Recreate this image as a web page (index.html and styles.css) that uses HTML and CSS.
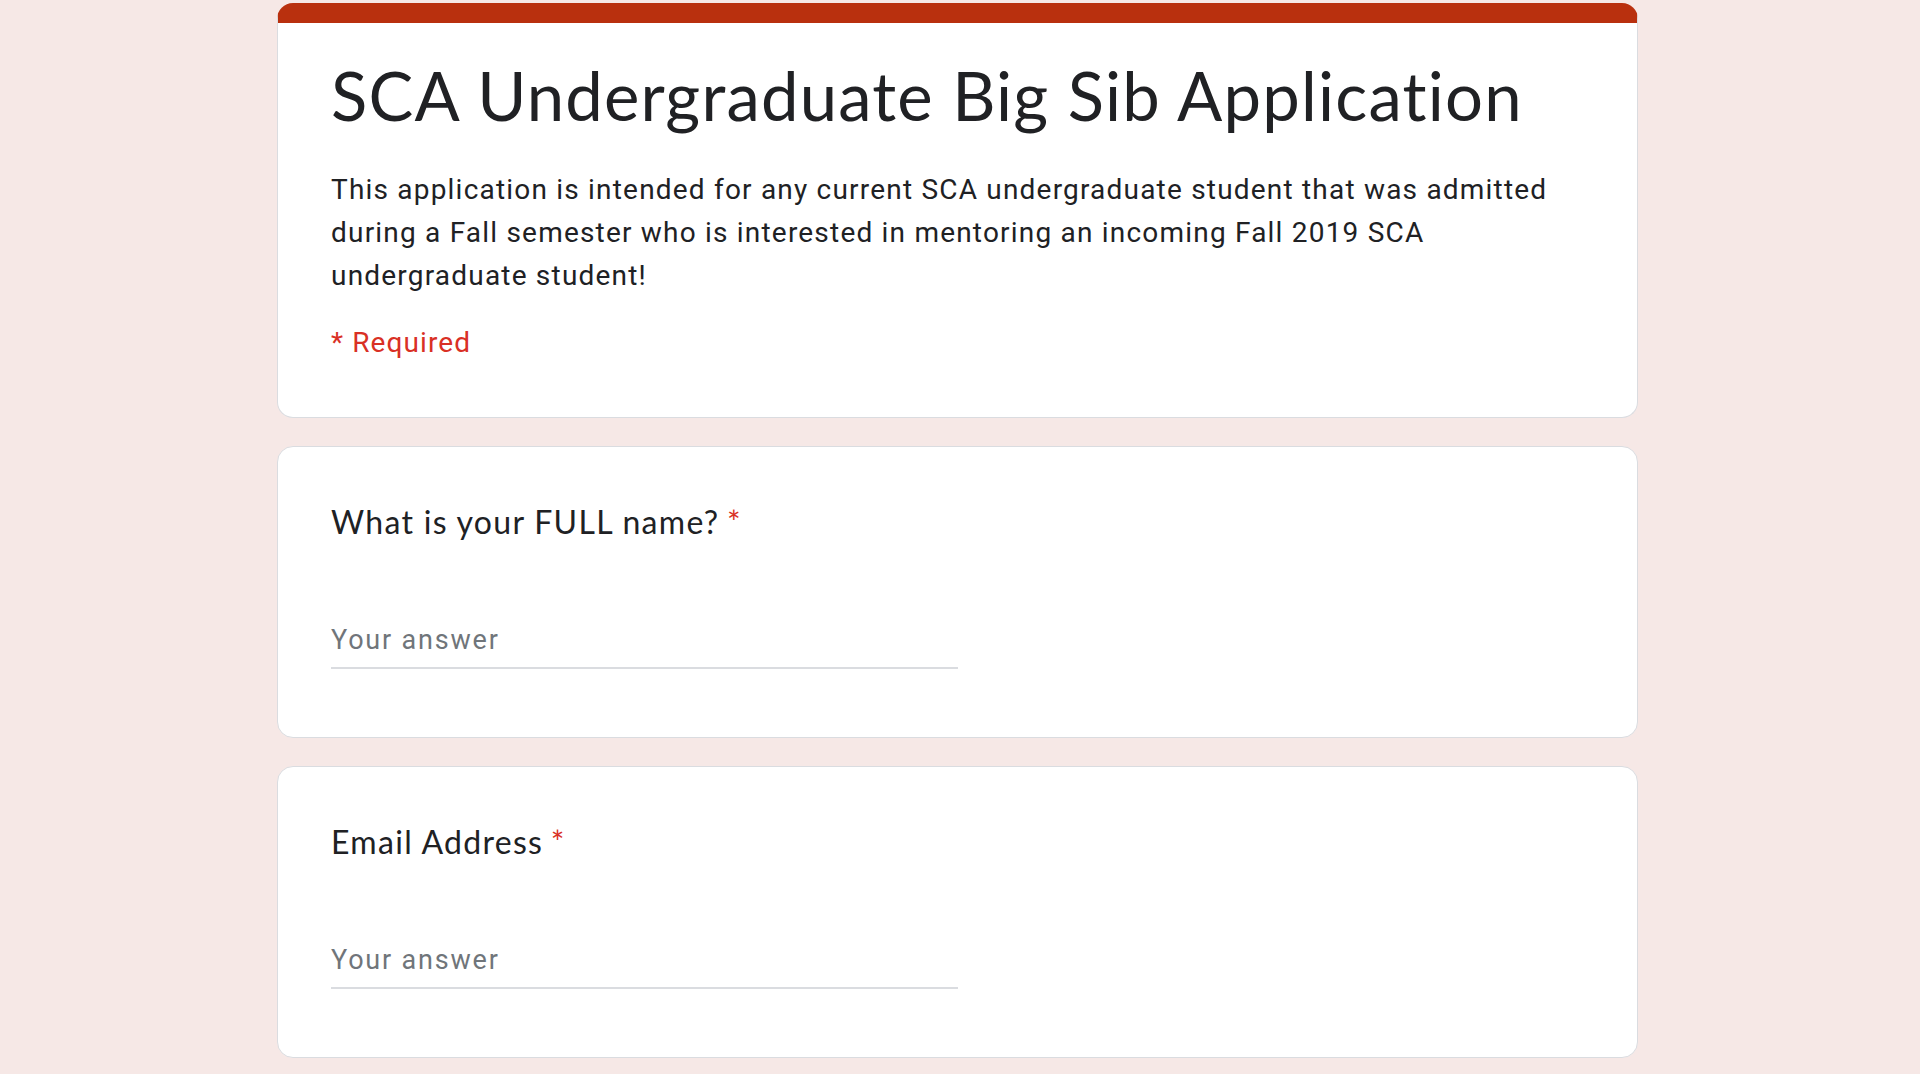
FILE: index.html
```html
<!DOCTYPE html>
<html lang="en">
<head>
<meta charset="utf-8">
<title>SCA Undergraduate Big Sib Application</title>
<link rel="stylesheet" href="styles.css">
</head>
<body>
<main class="form">
  <section class="card header-card">
    <h1 class="form-title">SCA Undergraduate Big Sib Application</h1>
    <p class="form-desc">This application is intended for any current SCA undergraduate student that was admitted during a Fall semester who is interested in mentoring an incoming Fall 2019 SCA undergraduate student!</p>
    <p class="required-note">* Required</p>
  </section>
  <section class="card question-card">
    <h2 class="question">What is your FULL name? <span class="star">*</span></h2>
    <div class="answer">Your answer</div>
  </section>
  <section class="card question-card">
    <h2 class="question">Email Address <span class="star">*</span></h2>
    <div class="answer">Your answer</div>
  </section>
</main>
</body>
</html>
```
FILE: styles.css
```css
html, body {
  margin: 0;
  padding: 0;
  background: #f6e8e6;
}
body {
  font-family: Roboto, "Liberation Sans", sans-serif;
  color: #202124;
}
.form {
  width: 1361px;
  margin: 3px 0 0 277px;
  display: flex;
  flex-direction: column;
  gap: 28px;
}
.card {
  background: #fff;
  border: 1px solid #dadce0;
  border-radius: 16px;
  box-sizing: border-box;
}
.header-card {
  border-top: 20px solid #b9300e;
  padding: 32px 53px 53px;
}
.form-title {
  margin: 0;
  font-family: Lato, "Open Sans", sans-serif;
  font-weight: 400;
  font-size: 67px;
  line-height: 80px;
  letter-spacing: 1.2px;
  color: #202124;
}
.form-desc {
  margin: 33px 0 0;
  font-family: Roboto, sans-serif;
  font-size: 28px;
  line-height: 43px;
  letter-spacing: 1.2px;
  color: #202124;
}
.required-note {
  margin: 24px 0 0;
  font-size: 28px;
  line-height: 43px;
  letter-spacing: 1.1px;
  color: #d93025;
}
.question-card {
  padding: 49px 53px 68px;
}
.question {
  margin: 0;
  font-family: Lato, "Open Sans", sans-serif;
  font-weight: 400;
  font-size: 32px;
  line-height: 51px;
  letter-spacing: 1.3px;
  color: #202124;
}
.star {
  color: #d93025;
  margin-left: -2px;
}
.answer {
  width: 627px;
  margin-top: 73px;
  padding-bottom: 7px;
  border-bottom: 2px solid #dadce0;
  font-size: 27px;
  line-height: 40px;
  letter-spacing: 1.8px;
  color: #70757a;
}
```
